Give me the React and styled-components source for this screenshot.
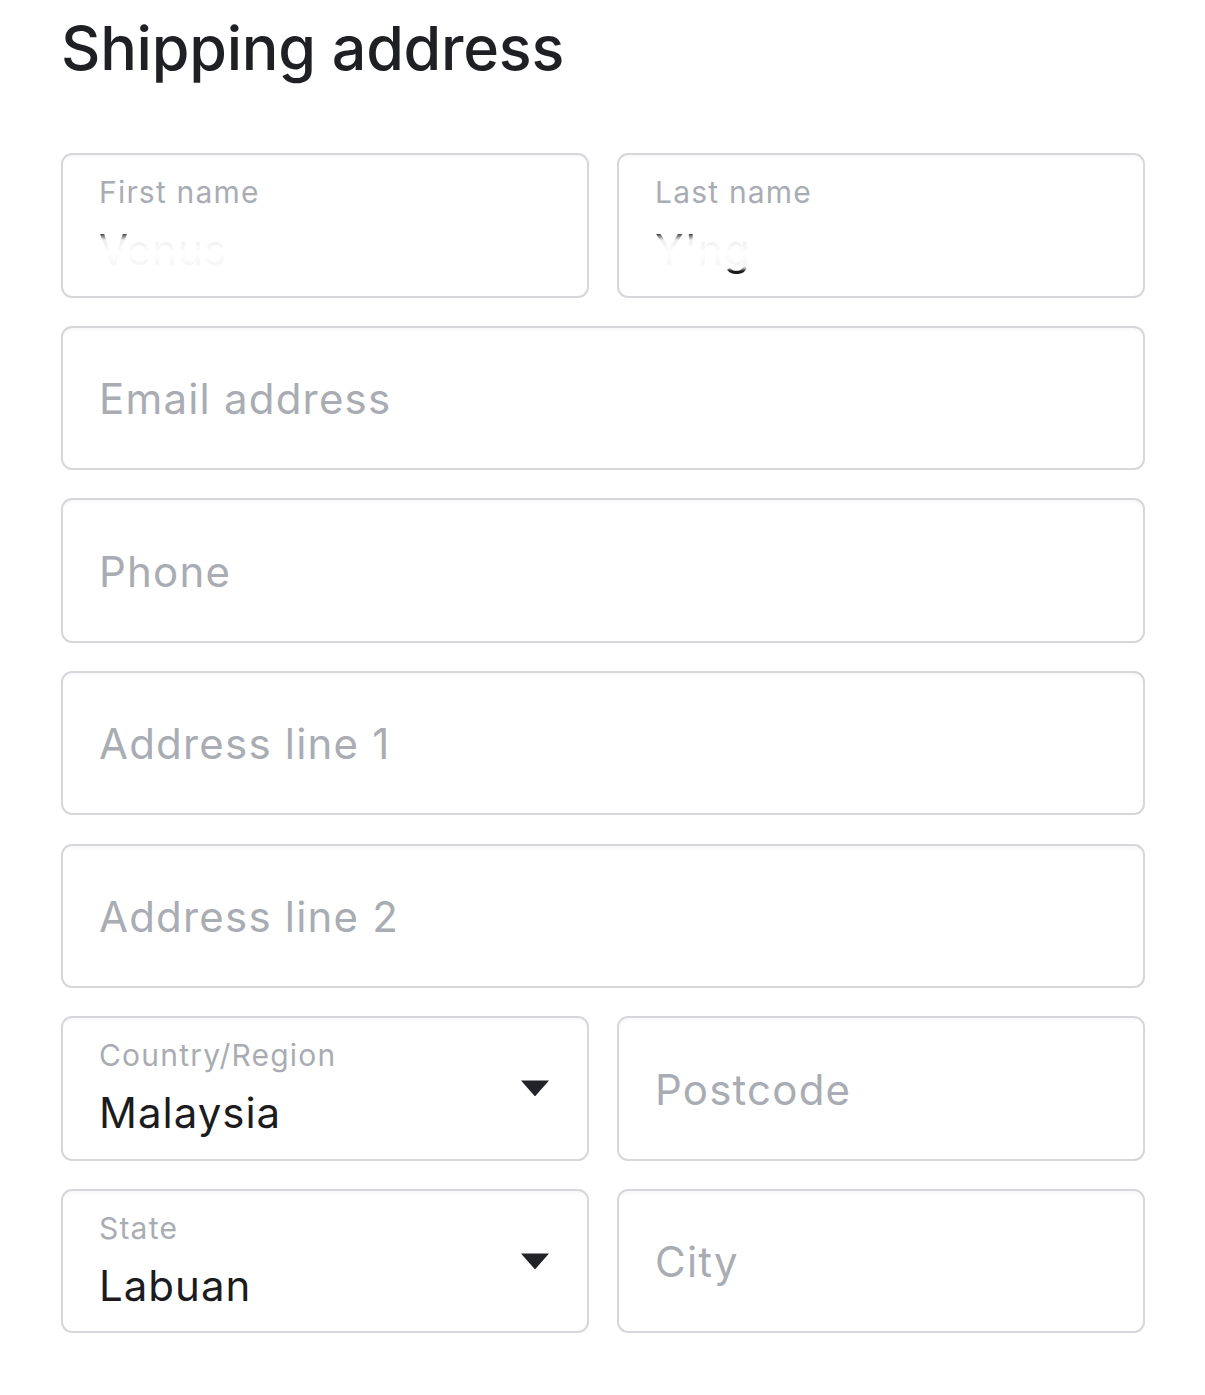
import React from "react";
import styled, { createGlobalStyle } from "styled-components";

const Global = createGlobalStyle`
  html, body { margin: 0; padding: 0; background: #ffffff; }
  body { font-family: Inter, "Noto Sans", "Liberation Sans", sans-serif; -webkit-font-smoothing: antialiased; }
`;

const Page = styled.div`
  padding: 10px 60px 40px 61px;
  width: 1084px;
`;

const Heading = styled.h1`
  margin: 0 0 67px 0;
  font-size: 61px;
  line-height: 76px;
  font-weight: 500;
  color: #1f2023;
  letter-spacing: -0.25px;
`;

const Grid = styled.div`
  display: grid;
  grid-template-columns: 1fr 1fr;
  column-gap: 28px;
  row-gap: 28.17px;
`;

const Box = styled.div`
  grid-column: ${(p) => (p.$wide ? "1 / span 2" : "auto")};
  position: relative;
  box-sizing: border-box;
  height: 144.5px;
  border: 2px solid #d5d7db;
  border-radius: 11px;
  background: #fff;
  box-shadow: inset 0 5px 4px -3px rgba(0, 0, 0, 0.035);
  padding: 0 80px 0 36px;
  display: flex;
  flex-direction: column;
  justify-content: ${(p) => (p.$floating ? "flex-start" : "center")};
`;

const Label = styled.div`
  margin-top: 19px;
  font-size: 30px;
  line-height: 36px;
  color: #a9adb3;
  letter-spacing: 1.2px;
`;

const Value = styled.div`
  margin-top: 15px;
  font-size: 42px;
  line-height: 50px;
  color: #1c1c1e;
  white-space: nowrap;
  letter-spacing: 1px;
`;

const FadedValue = styled(Value)`
  align-self: flex-start;
  background: linear-gradient(
    180deg,
    #1c1c1e 0%,
    #2a2a2c 16%,
    #eeeeee 30%,
    #ffffff 55%,
    #f3f3f3 84%,
    #1c1c1e 92%,
    #1c1c1e 100%
  );
  -webkit-background-clip: text;
  background-clip: text;
  color: transparent;
`;

const Placeholder = styled.div`
  font-size: 42px;
  line-height: 50px;
  color: #a9adb3;
  margin-top: 2px;
  letter-spacing: 1.2px;
`;

const Caret = styled.svg`
  position: absolute;
  right: 37px;
  top: 61px;
  width: 30px;
  height: 18px;
`;

function Arrow() {
  return (
    <Caret viewBox="0 0 30 18">
      <path d="M1 1.5 H29 L15.6 16.8 Q15 17.4 14.4 16.8 Z" fill="#222326" />
    </Caret>
  );
}

function FloatField({ label, value, faded, select }) {
  const V = faded ? FadedValue : Value;
  return (
    <Box $floating>
      <Label>{label}</Label>
      <V>{value}</V>
      {select && <Arrow />}
    </Box>
  );
}

function PlainField({ placeholder, wide }) {
  return (
    <Box $wide={wide}>
      <Placeholder>{placeholder}</Placeholder>
    </Box>
  );
}

export default function App() {
  return (
    <>
      <Global />
      <Page>
        <Heading>Shipping address</Heading>
        <Grid>
          <FloatField label="First name" value="Venus" faded />
          <FloatField label="Last name" value="Y'ng" faded />
          <PlainField placeholder="Email address" wide />
          <PlainField placeholder="Phone" wide />
          <PlainField placeholder="Address line 1" wide />
          <PlainField placeholder="Address line 2" wide />
          <FloatField label="Country/Region" value="Malaysia" select />
          <PlainField placeholder="Postcode" />
          <FloatField label="State" value="Labuan" select />
          <PlainField placeholder="City" />
        </Grid>
      </Page>
    </>
  );
}
